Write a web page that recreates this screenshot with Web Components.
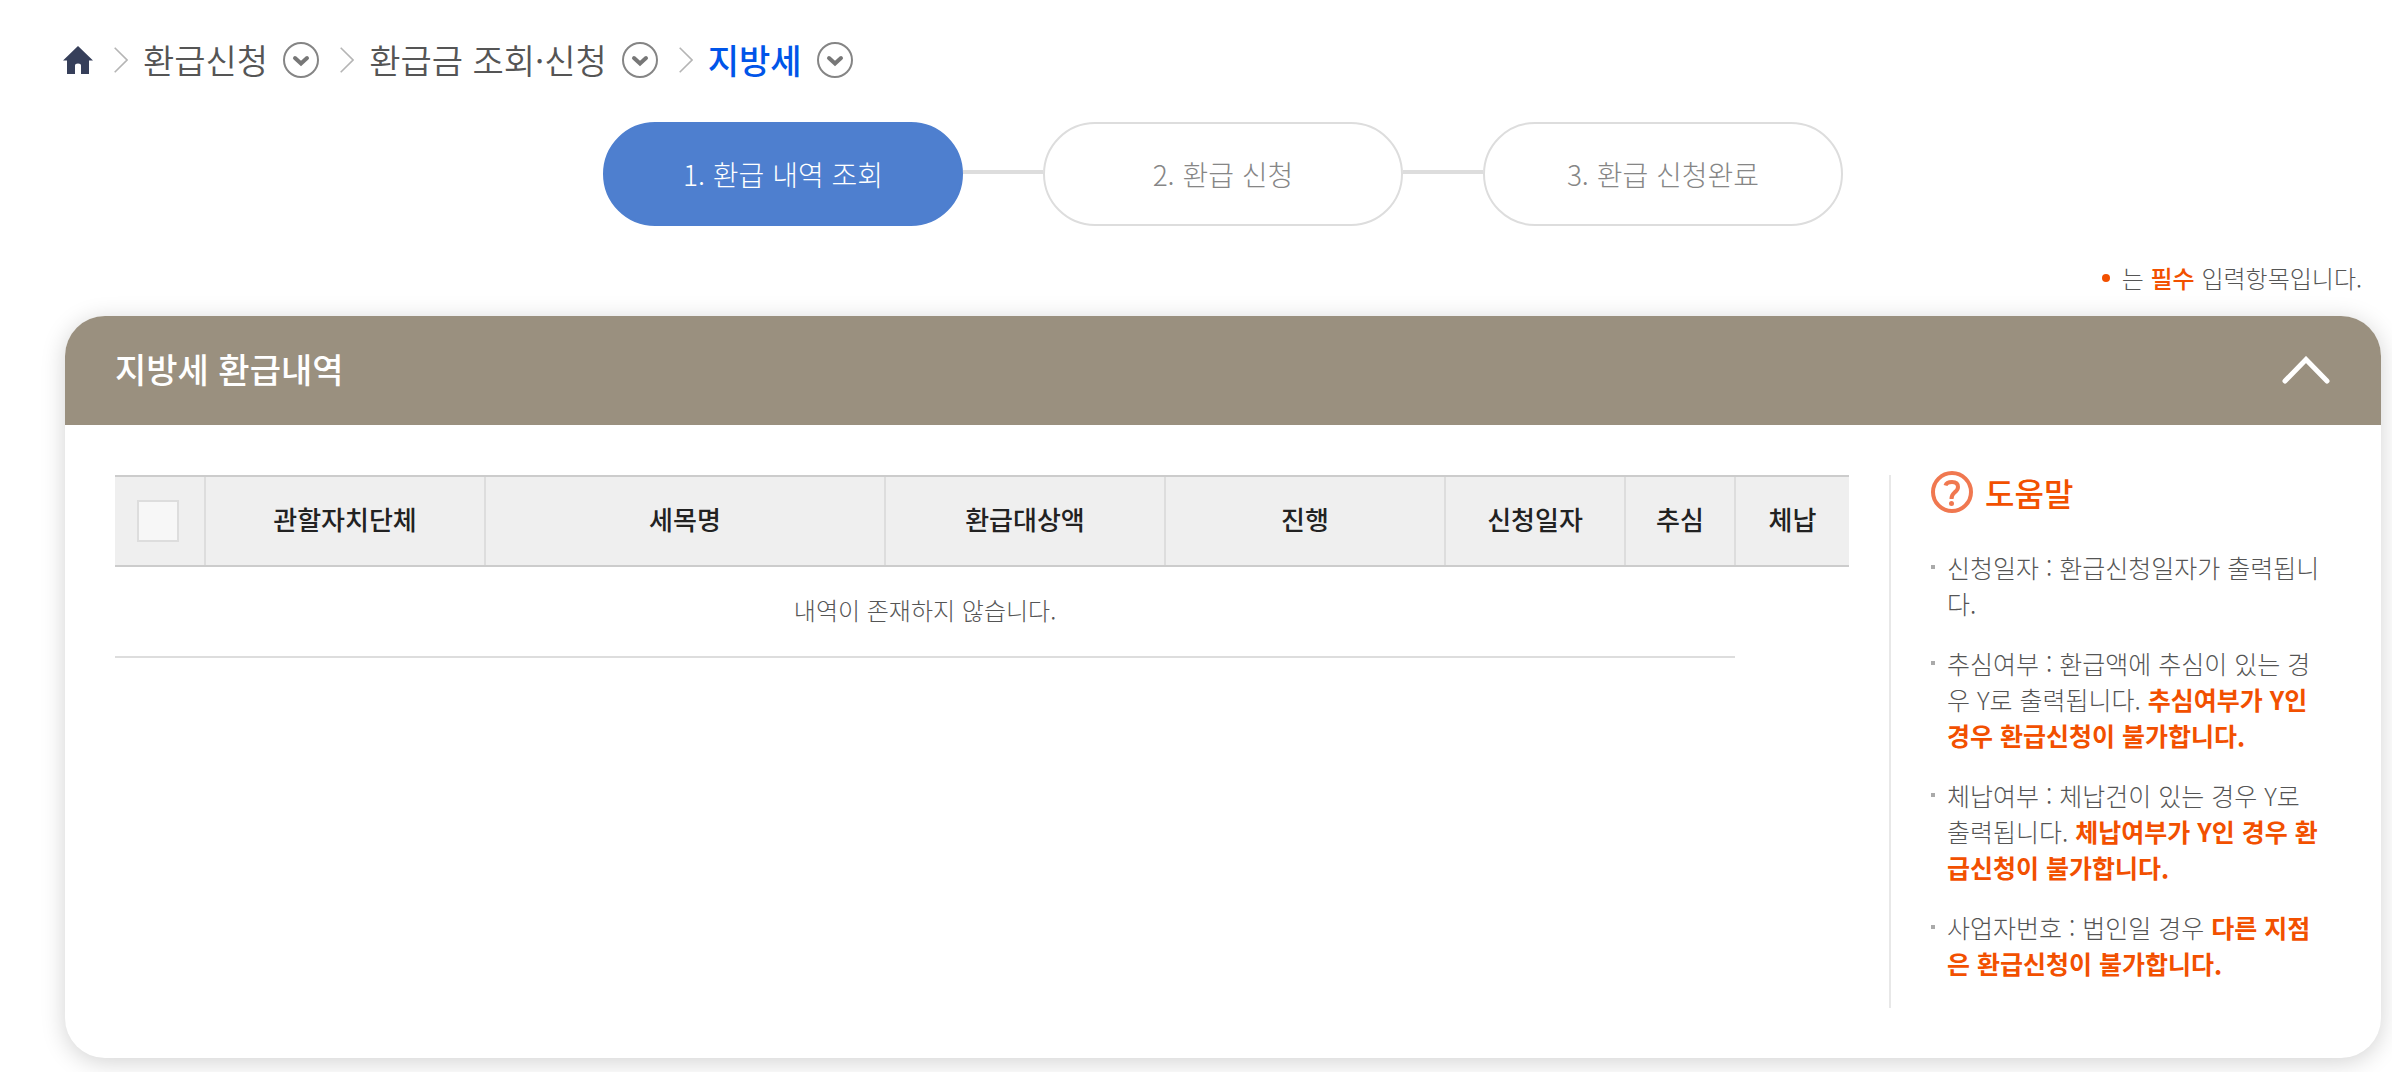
<!DOCTYPE html>
<html lang="ko">
<head>
<meta charset="utf-8">
<title>지방세 환급내역</title>
<style>
body {
	margin: 0;
	background: #fff;
	color: #555;
	font: 400 25px/36px "Noto Sans CJK KR", "Noto Sans", sans-serif;
}
</style>
</head>
<body>
<refund-page>
	<bread-crumb slot="nav">
		<crumb-item>환급신청</crumb-item>
		<crumb-item>환급금 조회·신청</crumb-item>
		<crumb-item current>지방세</crumb-item>
	</bread-crumb>
	<step-list slot="steps">
		<step-item current>1. 환급 내역 조회</step-item>
		<step-item>2. 환급 신청</step-item>
		<step-item>3. 환급 신청완료</step-item>
	</step-list>
	<required-note></required-note>
	<fold-panel heading="지방세 환급내역">
		<refund-table></refund-table>
		<help-box slot="aside" heading="도움말">
			<help-item>신청일자 : 환급신청일자가 출력됩니다.</help-item>
			<help-item>추심여부 : 환급액에 추심이 있는 경우 Y로 출력됩니다. <strong>추심여부가 Y인 경우 환급신청이 불가합니다.</strong></help-item>
			<help-item>체납여부 : 체납건이 있는 경우 Y로 출력됩니다. <strong>체납여부가 Y인 경우 환급신청이 불가합니다.</strong></help-item>
			<help-item>사업자번호 : 법인일 경우 <strong>다른 지점은 환급신청이 불가합니다.</strong></help-item>
		</help-box>
	</fold-panel>
</refund-page>

<script>
// Small base class: renders this.html into an open shadow root
class BaseElement extends HTMLElement {
	constructor() {
		super();
		const template = document.createElement('template');
		template.innerHTML = this.html;
		this.attachShadow({ mode: 'open' });
		this.shadowRoot.appendChild(template.content.cloneNode(true));
	}
}

class RefundPage extends BaseElement {
	get html() {
		return `
<style>
:host { display: block; padding: 36px 11px 14px 65px; }
main { display: flex; flex-direction: column; }
</style>
<slot name="nav"></slot>
<main>
	<slot name="steps"></slot>
	<slot></slot>
</main>`;
	}
}

class BreadCrumb extends BaseElement {
	get html() {
		return `
<style>
:host { display: block; }
nav { display: flex; align-items: center; height: 48px; }
a { display: flex; margin-left: -2px; }
</style>
<nav aria-label="현재 위치">
	<a href="#" aria-label="홈">
		<svg width="30" height="28" viewBox="0 0 30 28"><path d="M15 0 30 14.500H26V28H18V19.500Q18 17.500 15 17.500T12 19.500V28H4V14.500H0Z" fill="#363f5a"/></svg>
	</a>
	<slot></slot>
</nav>`;
	}
}

class CrumbItem extends BaseElement {
	get html() {
		return `
<style>
:host { display: flex; align-items: center; font-size: 34px; line-height: 48px; }
a { color: #555; font-weight: 350; text-decoration: none; margin: 0 15px; }
:host([current]) a { color: #0055e9; font-weight: 500; }
button { display: flex; padding: 0; border: 0; background: none; cursor: pointer; }
.arrow { margin-left: 21px; }
svg { fill: none; }
</style>
<svg class="arrow" width="14" height="26" viewBox="0 0 14 26"><path d="M.7.7 13 13 .7 25.300" stroke="#b5b5b5" stroke-width="1.600"/></svg>
<a href="#"><slot></slot></a>
<button type="button" aria-label="하위 메뉴 열기">
	<svg width="36" height="36" viewBox="0 0 36 36">
		<circle cx="18" cy="18" r="17" stroke="#858585" stroke-width="2"/>
		<path d="M12 16 18 21.500 24 16" stroke="#777" stroke-width="4" stroke-linecap="round"/>
	</svg>
</button>`;
	}
}

class StepList extends BaseElement {
	get html() {
		return `
<style>
:host { display: block; margin-top: 38px; }
div { display: flex; justify-content: center; }
</style>
<div role="list"><slot></slot></div>`;
	}
}

class StepItem extends BaseElement {
	get html() {
		return `
<style>
:host { display: flex; align-items: center; }
:host(:not(:first-child))::before { content: ""; width: 80px; height: 4px; margin-bottom: 4px; background: #ddd; }
span {
	box-sizing: border-box;
	display: flex;
	align-items: center;
	justify-content: center;
	width: 360px;
	height: 104px;
	border: 2px solid #ddd;
	border-radius: 52px;
	color: #868686;
	font-size: 28px;
	font-weight: 300;
}
:host([current]) span { border-color: #4e7fcf; background: #4e7fcf; color: #fff; }
</style>
<span><slot></slot></span>`;
	}
	connectedCallback() {
		this.setAttribute('role', 'listitem');
	}
}

class RequiredNote extends BaseElement {
	get html() {
		return `
<style>
:host { display: flex; align-items: center; justify-content: flex-end; gap: 12px; margin: 34px 19px 20px 0; font-size: 24px; font-weight: 300; }
i { width: 8px; height: 8px; border-radius: 50%; background: #f25000; }
p { margin: 0; }
strong { color: #f25000; font-weight: 500; }
</style>
<i></i><p>는 <strong>필수</strong> 입력항목입니다.</p>`;
	}
}

class FoldPanel extends BaseElement {
	get html() {
		return `
<style>
:host { display: block; border-radius: 40px; background: #fff; box-shadow: 0 4px 24px rgba(0, 0, 0, .18); }
header { display: flex; align-items: center; justify-content: space-between; height: 109px; padding: 0 50px; border-radius: 40px 40px 0 0; background: #9a907f; }
h2 { margin: 0; padding-bottom: 4px; color: #fff; font-size: 34px; font-weight: 500; line-height: 48px; }
button { display: flex; padding: 0; border: 0; background: none; cursor: pointer; }
.body { display: flex; gap: 40px; padding: 50px; }
.body.closed { display: none; }
.content { flex: 1; min-width: 0; }
</style>
<header>
	<h2></h2>
	<button type="button" aria-label="접기" aria-expanded="true">
		<svg width="50" height="30" viewBox="0 0 50 30"><path d="M4 25 25 3.500 46 25" fill="none" stroke="#fff" stroke-width="5" stroke-linecap="round"/></svg>
	</button>
</header>
<div class="body">
	<div class="content"><slot></slot></div>
	<slot name="aside"></slot>
</div>`;
	}
	connectedCallback() {
		this.shadowRoot.querySelector('h2').textContent = this.getAttribute('heading');
		const button = this.shadowRoot.querySelector('button');
		button.addEventListener('click', () => {
			const closed = this.shadowRoot.querySelector('.body').classList.toggle('closed');
			button.setAttribute('aria-expanded', String(!closed));
		});
	}
}

class RefundTable extends BaseElement {
	get html() {
		return `
<style>
:host { display: block; }
table { width: 100%; border-collapse: collapse; table-layout: fixed; }
th { height: 84px; padding: 0 0 4px; border-top: 2px solid #ccc; border-bottom: 2px solid #ccc; background: #efefef; color: #222; font-size: 26px; font-weight: 500; }
th + th { border-left: 2px solid #ddd; }
th:first-child { padding: 0 4px 0 0; }
td { height: 85px; padding: 0 0 4px; border-bottom: 2px solid #ddd; text-align: center; font-size: 24px; font-weight: 300; }
input { display: block; appearance: none; box-sizing: border-box; width: 42px; height: 42px; margin: 0 auto; border: 2px solid #ddd; background: #f7f7f7; }
input:checked { background: #4e7fcf; }
.check { width: 90px; }
.md { width: 280px; }
.lg { width: 400px; }
.date { width: 180px; }
.sm { width: 110px; }
</style>
<table>
	<colgroup>
		<col class="check"><col class="md"><col class="lg"><col class="md"><col class="md"><col class="date"><col class="sm"><col>
	</colgroup>
	<thead>
		<tr>
			<th scope="col"><input type="checkbox" aria-label="전체 선택"></th>
			<th scope="col">관할자치단체</th>
			<th scope="col">세목명</th>
			<th scope="col">환급대상액</th>
			<th scope="col">진행</th>
			<th scope="col">신청일자</th>
			<th scope="col">추심</th>
			<th scope="col">체납</th>
		</tr>
	</thead>
	<tbody>
		<tr><td colspan="7">내역이 존재하지 않습니다.</td></tr>
	</tbody>
</table>`;
	}
}

class HelpBox extends BaseElement {
	get html() {
		return `
<style>
:host { display: block; box-sizing: border-box; width: 442px; padding: 0 10px 3px 40px; border-left: 2px solid #e8e8e8; }
h3 { display: flex; align-items: center; gap: 12px; height: 34px; margin: 0 0 40px; color: #f25000; font-size: 32px; font-weight: 500; }
</style>
<h3>
	<svg width="42" height="42" viewBox="0 0 42 42" fill="none" stroke="#f07850">
		<circle cx="21" cy="21" r="19" stroke-width="4"/>
		<path d="M14.500 14.500Q15.500 11 21 11 27 11 27 16 27 19 23.500 21.500 20.500 24 20.500 28" stroke-width="4"/>
		<circle cx="20.500" cy="32.500" r="2.500" fill="#f07850" stroke="none"/>
	</svg>
	<span></span>
</h3>
<div role="list"><slot></slot></div>`;
	}
	connectedCallback() {
		this.shadowRoot.querySelector('span').textContent = this.getAttribute('heading');
	}
}

class HelpItem extends BaseElement {
	get html() {
		return `
<style>
:host { display: flex; gap: 12px; margin-bottom: 24px; font-weight: 300; }
i { flex: none; width: 4px; height: 4px; margin-top: 16px; background: #aaa; }
p { margin: 0; }
::slotted(strong) { color: #f25000; font-weight: 700; }
</style>
<i></i><p><slot></slot></p>`;
	}
	connectedCallback() {
		this.setAttribute('role', 'listitem');
	}
}

customElements.define('refund-page', RefundPage);
customElements.define('bread-crumb', BreadCrumb);
customElements.define('crumb-item', CrumbItem);
customElements.define('step-list', StepList);
customElements.define('step-item', StepItem);
customElements.define('required-note', RequiredNote);
customElements.define('fold-panel', FoldPanel);
customElements.define('refund-table', RefundTable);
customElements.define('help-box', HelpBox);
customElements.define('help-item', HelpItem);
</script>
</body>
</html>
